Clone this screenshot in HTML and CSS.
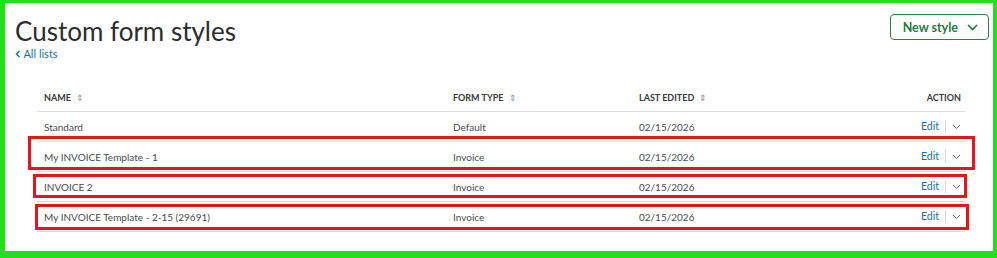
FILE: index.html
```html
<!DOCTYPE html>
<html lang="en">
<head>
    <meta charset="UTF-8">
    <title>Custom form styles</title>
    <link rel="stylesheet" href="styles.css">
</head>
<body>
    <div class="frame">
        <div class="page-head">
            <div>
                <h1>Custom form styles</h1>
                <a class="back-link" href="#"><svg width="6" height="8" viewBox="0 0 6 8"><path d="M4.5 1L1.5 4l3 3" fill="none" stroke="currentColor" stroke-width="1.5"/></svg> All lists</a>
            </div>
            <button class="new-btn">New style
                <svg width="11" height="7" viewBox="0 0 11 7"><path d="M1 1l4.5 4.5L10 1" fill="none" stroke="currentColor" stroke-width="1.6"/></svg>
            </button>
        </div>

        <table class="styles-table">
            <thead>
                <tr>
                    <th class="col-name">Name <span class="sort">&#8661;</span></th>
                    <th class="col-type">Form type <span class="sort">&#8661;</span></th>
                    <th class="col-date">Last edited <span class="sort">&#8661;</span></th>
                    <th class="col-action">Action</th>
                </tr>
            </thead>
            <tbody>
                <tr>
                    <td>Standard</td>
                    <td>Default</td>
                    <td>02/15/2026</td>
                    <td class="col-action"><a href="#" class="edit">Edit</a><span class="divider"></span><svg class="caret" width="9" height="6" viewBox="0 0 9 6"><path d="M1 1l3.5 3.5L8 1" fill="none" stroke="currentColor" stroke-width="1"/></svg></td>
                </tr>
                <tr>
                    <td>My INVOICE Template - 1</td>
                    <td>Invoice</td>
                    <td>02/15/2026</td>
                    <td class="col-action"><a href="#" class="edit">Edit</a><span class="divider"></span><svg class="caret" width="9" height="6" viewBox="0 0 9 6"><path d="M1 1l3.5 3.5L8 1" fill="none" stroke="currentColor" stroke-width="1"/></svg></td>
                </tr>
                <tr>
                    <td>INVOICE 2</td>
                    <td>Invoice</td>
                    <td>02/15/2026</td>
                    <td class="col-action"><a href="#" class="edit">Edit</a><span class="divider"></span><svg class="caret" width="9" height="6" viewBox="0 0 9 6"><path d="M1 1l3.5 3.5L8 1" fill="none" stroke="currentColor" stroke-width="1"/></svg></td>
                </tr>
                <tr>
                    <td>My INVOICE Template - 2-15 (29691)</td>
                    <td>Invoice</td>
                    <td>02/15/2026</td>
                    <td class="col-action"><a href="#" class="edit">Edit</a><span class="divider"></span><svg class="caret" width="9" height="6" viewBox="0 0 9 6"><path d="M1 1l3.5 3.5L8 1" fill="none" stroke="currentColor" stroke-width="1"/></svg></td>
                </tr>
            </tbody>
        </table>

        <!-- annotation boxes drawn over the screenshot -->
        <div class="mark mark-1"></div>
        <div class="mark mark-2"></div>
        <div class="mark mark-3"></div>
    </div>
</body>
</html>
```

FILE: styles.css
```css
body {
    margin: 0;
    font-family: Lato, "Open Sans", sans-serif;
    color: #393a3d;
    background: #fff;
}
.frame {
    position: relative;
    box-sizing: border-box;
    width: 997px;
    height: 258px;
    border-style: solid;
    border-color: #22e11a;
    border-width: 3px 4px 7px 5px;
    padding: 0 0 0 10px;
}
.page-head {
    display: flex;
    justify-content: space-between;
    align-items: flex-start;
    padding-top: 13px;
    padding-right: 4px;
}
h1 {
    margin: 0;
    font-size: 26px;
    font-weight: 400;
    line-height: 30px;
    color: #2b2c2f;
}
.back-link {
    display: block;
    font-size: 11px;
    line-height: 13px;
    color: #1a6fa5;
    text-decoration: none;
    margin-top: 1px;
}
.new-btn {
    display: flex;
    align-items: center;
    gap: 9px;
    margin-top: -2px;
    height: 26px;
    padding: 0 10px 0 12px;
    border: 1px solid #2d7d45;
    border-radius: 4px;
    background: #fff;
    color: #1f7a3f;
    font-family: Lato, sans-serif;
    font-size: 12.5px;
    font-weight: 700;
}
.styles-table {
    margin: 24px 0 0 22px;
    width: 928px;
    border-collapse: collapse;
    font-size: 10px;
}
th {
    text-align: left;
    font-size: 9px;
    font-weight: 700;
    text-transform: uppercase;
    color: #393a3d;
    height: 27px;
    padding: 0 7px;
    border-bottom: 1px solid #dcdcdc;
}
td {
    height: 29px;
    padding: 0 7px;
    border-bottom: 1px solid #dcdcdc;
    color: #4a4b4e;
}
.sort {
    font-size: 9px;
    color: #8d9096;
    margin-left: 3px;
    font-weight: 400;
}
.col-name { width: 395px; }
.col-type { width: 172px; }
.col-date { width: 200px; }
.col-action { text-align: right; padding-right: 4px; }
th.col-action { padding-right: 4px; }
.edit {
    color: #1a6fa5;
    text-decoration: none;
    font-size: 10.5px;
}
.divider {
    display: inline-block;
    width: 1px;
    height: 13px;
    background: #d4d7dc;
    margin: 0 6px 0 6px;
    vertical-align: middle;
}
.caret {
    color: #6b6c72;
    vertical-align: middle;
}
.mark {
    position: absolute;
    border: 3px solid #e3161b;
}
.mark-1 { left: 23px; top: 133px; width: 941px; height: 28px; }
.mark-2 { left: 28px; top: 171px; width: 928px; height: 18px; }
.mark-3 { left: 30px; top: 201px; width: 928px; height: 20px; }
```
